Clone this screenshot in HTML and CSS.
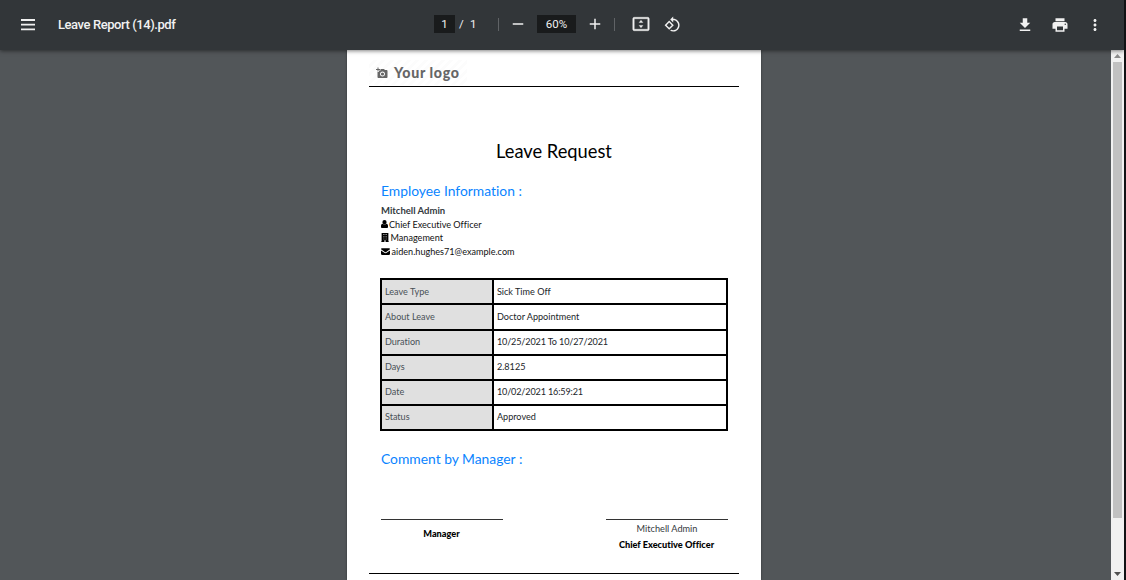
FILE: index.html
```html
<!DOCTYPE html>
<html lang="en">
<head>
<meta charset="utf-8">
<title>Leave Report (14).pdf</title>
<link rel="stylesheet" href="styles.css">
</head>
<body>
<div class="viewer">
  <header class="toolbar">
    <div class="start">
      <svg class="menu" viewBox="0 0 14 12"><path d="M0 1h14M0 5.7h14M0 10.4h14"/></svg>
      <span class="filename">Leave Report (14).pdf</span>
    </div>
    <div class="center">
      <span class="box page-no">1</span>
      <span class="slash">/</span>
      <span class="total">1</span>
      <i class="divider first"></i>
      <svg class="icon minus" viewBox="0 0 24 24"><path d="M19 13H5v-2h14v2z"/></svg>
      <span class="box zoom">60%</span>
      <svg class="icon plus" viewBox="0 0 24 24"><path d="M19 13h-6v6h-2v-6H5v-2h6V5h2v6h6v2z"/></svg>
      <i class="divider second"></i>
      <svg class="icon fit" viewBox="0 0 24 24"><path d="M21 3H3c-1.1 0-2 .9-2 2v14c0 1.1.9 2 2 2h18c1.1 0 2-.9 2-2V5c0-1.1-.9-2-2-2zm0 16H3V5h18v14zM12 7l-2.500 3h5zM9.500 14l2.500 3 2.500-3z"/></svg>
      <svg class="icon rotate" viewBox="0 0 24 24"><path d="M7.34 6.41.86 12.9l6.49 6.48 6.49-6.48-6.5-6.49zM3.69 12.9l3.66-3.66L11 12.9l-3.66 3.66-3.65-3.66zM19.36 6.64C17.61 4.88 15.3 4 13 4V.76L8.76 5 13 9.24V6c1.79 0 3.58.68 4.95 2.05 2.73 2.73 2.73 7.17 0 9.9C16.58 19.32 14.79 20 13 20c-.97 0-1.94-.21-2.84-.61l-1.49 1.49C10.02 21.62 11.51 22 13 22c2.3 0 4.61-.88 6.36-2.64 3.52-3.51 3.52-9.21 0-12.72z"/></svg>
    </div>
    <div class="end">
      <svg class="icon" viewBox="0 0 24 24"><path d="M19 9h-4V3H9v6H5l7 7 7-7zM5 18v2h14v-2H5z"/></svg>
      <svg class="icon" viewBox="0 0 24 24"><path d="M19 8H5c-1.66 0-3 1.34-3 3v6h4v4h12v-4h4v-6c0-1.66-1.34-3-3-3zm-3 11H8v-5h8v5zm3-7c-.55 0-1-.45-1-1s.45-1 1-1 1 .45 1 1-.45 1-1 1zm-1-9H6v4h12V3z"/></svg>
      <svg class="icon" viewBox="0 0 24 24"><path d="M12 8c1.1 0 2-.9 2-2s-.9-2-2-2-2 .9-2 2 .9 2 2 2zm0 2c-1.1 0-2 .9-2 2s.9 2 2 2 2-.9 2-2-.9-2-2-2zm0 6c-1.1 0-2 .9-2 2s.9 2 2 2 2-.9 2-2-.9-2-2-2z"/></svg>
    </div>
  </header>
  <main class="stage">
    <article class="paper">
      <div class="letterhead">
        <div class="logo">
          <svg viewBox="0 0 24 24"><path fill-rule="evenodd" d="M3 4V1h2v3h3v2H5v3H3V6H0V4h3zm3 6V7h3V4h7l1.830 2H21c1.100 0 2 .9 2 2v12c0 1.100-.9 2-2 2H5c-1.100 0-2-.9-2-2V10h3zm7 9c2.760 0 5-2.240 5-5s-2.240-5-5-5-5 2.240-5 5 2.240 5 5 5zm-3.200-5a3.200 3.200 0 1 0 6.400 0 3.200 3.200 0 1 0-6.400 0z"/></svg>
          <span>Your logo</span>
        </div>
      </div>
      <div class="body">
        <h1>Leave Request</h1>
        <h2>Employee Information :</h2>
        <ul class="person">
          <li class="name">Mitchell Admin</li>
          <li class="job"><svg viewBox="0 0 14 16"><path d="M7 8.500a4.200 4.200 0 1 0 0-8.500 4.200 4.200 0 0 0 0 8.500zM3 7.500c2 2 6 2 8 0 2 .5 3 2.500 3 4.500v2c0 1-.7 2-2 2H2c-1.300 0-2-1-2-2v-2c0-2 1-4 3-4.500z"/></svg><span>Chief Executive Officer</span></li>
          <li class="dept"><svg viewBox="0 0 14 16"><path fill-rule="evenodd" d="M1 0h12v15h1v1H8v-3H6v3H0v-1h1zM4 2v1.500h2V2zm4 0v1.500h2V2zM4 6v1.500h2V6zm4 0v1.500h2V6zM4 10v1h2v-1zm4 0v1h2v-1z"/></svg><span>Management</span></li>
          <li class="mail"><svg viewBox="0 0 16 12"><path d="M0 1.500C0 .6.7 0 1.500 0h13c.8 0 1.500.6 1.500 1.500v.7L9.200 7c-.8.5-1.600.5-2.400 0L0 2.200zM0 4l6 4.300c1.300.9 2.700.9 4 0L16 4v6.500c0 .8-.7 1.500-1.500 1.500h-13C.7 12 0 11.300 0 10.500z"/></svg><span>aiden.hughes71@example.com</span></li>
        </ul>
        <table class="details">
          <tr><th>Leave Type</th><td>Sick Time Off</td></tr>
          <tr><th>About Leave</th><td>Doctor Appointment</td></tr>
          <tr><th>Duration</th><td class="digits">10/25/2021 To 10/27/2021</td></tr>
          <tr><th>Days</th><td>2.8125</td></tr>
          <tr><th>Date</th><td class="digits">10/02/2021 16:59:21</td></tr>
          <tr><th>Status</th><td>Approved</td></tr>
        </table>
        <h2 class="comment">Comment by Manager :</h2>
        <div class="signatures">
          <div class="sign"><b>Manager</b></div>
          <div class="sign"><span>Mitchell Admin</span><b>Chief Executive Officer</b></div>
        </div>
      </div>
      <div class="footer-rule"></div>
    </article>
    <div class="scrollbar">
      <svg viewBox="0 0 7 4"><path fill="#8b8b8b" d="M3.500 0 7 4H0z"/></svg>
      <div class="thumb"></div>
      <svg viewBox="0 0 7 4"><path fill="#505050" d="M0 0h7L3.500 4z"/></svg>
    </div>
  </main>
</div>
</body>
</html>
```
FILE: styles.css
```css
* { box-sizing: border-box; }
body { margin: 0; background: #111214; font-family: Lato, sans-serif; font-variant-ligatures: none; }
svg { display: block; flex: none; }
.viewer { width: 1124px; height: 580px; display: flex; flex-direction: column; overflow: hidden; background: #525659; }

.toolbar { flex: none; height: 50px; display: grid; grid-template-columns: 434px 1fr auto; align-items: center; padding-bottom: 2px; background: #323639; box-shadow: 0 1px 4px rgba(0,0,0,.5); position: relative; z-index: 1; color: #f1f1f1; font-family: Roboto, sans-serif; }
.start { display: flex; align-items: center; padding: 1px 0 0 21px; gap: 23px; }
.menu { width: 14px; height: 12px; stroke: #f1f1f1; stroke-width: 1.8; }
.filename { font-size: 13px; font-weight: 500; line-height: 18px; letter-spacing: -.43px; white-space: nowrap; }
.center { display: flex; align-items: center; font-size: 11.500px; line-height: 18px; }
.box { background: #191b1c; height: 18px; text-align: center; }
.page-no { width: 21px; }
.slash { margin-left: 4px; width: 8px; }
.total { margin-left: 3px; width: 7px; }
.divider { width: 1px; height: 13px; background: #606366; }
.first { margin-left: 21px; }
.second { margin-left: 10px; }
.icon { width: 18px; height: 18px; fill: #f1f1f1; }
.minus { margin-left: 10px; }
.zoom { width: 39px; margin-left: 10px; }
.plus { margin-left: 10px; }
.fit { margin-left: 17px; stroke: #f1f1f1; stroke-width: .5; }
.rotate { margin-left: 14px; width: 17px; height: 17px; }
.end { display: flex; gap: 17px; padding: 1px 20.500px 0 0; }

.stage { flex: 1; min-height: 0; display: grid; grid-template-columns: 347px 414px 1fr 13px; }
.paper { grid-column: 2; height: 530px; background: #fff; padding: 0 22px; color: #212529; box-shadow: 0 0 2px #303335; overflow: hidden; }
.letterhead { height: 37px; padding-top: 10px; border-bottom: 1px solid #000; }
.logo { width: 98px; height: 25px; display: flex; align-items: center; gap: 6px; padding-left: 7px; color: #666; font: 900 14.200px/25px Lato, sans-serif; letter-spacing: .65px; background: repeating-linear-gradient(135deg, #fff 0 3px, #fcfcfc 3px 6px); white-space: nowrap; }
.logo svg { width: 12px; height: 12px; fill: #666; }
.body { height: 486px; padding: 52px 11px 0 12px; }
h1, h2 { margin: 0; font-weight: 400; }
h1 { margin-left: -1px; text-align: center; font-size: 18.300px; line-height: 24px; color: #000; }
h2 { margin-top: 18px; font-size: 13.850px; line-height: 20px; color: #0a84ff; white-space: nowrap; }
.person { list-style: none; margin: 3px 0 0; padding: 0; font-size: 9.100px; line-height: 13.600px; color: #111; }
.person li { display: flex; align-items: center; height: 13.600px; white-space: nowrap; }
.person .name { font-size: 9.500px; font-weight: 700; color: #343a40; }
.person svg { fill: #000; }
.job svg { width: 7px; height: 8px; margin-right: 1px; }
.dept svg { width: 8px; height: 9px; margin-right: 1.500px; }
.mail svg { width: 9px; height: 7px; margin-right: 1.500px; }
.details { width: 348px; margin: 20px 0 0 -.6px; border-collapse: collapse; table-layout: fixed; font-size: 9.100px; line-height: 12px; }
.details tr { height: 25.100px; }
.details th, .details td { padding: 0 2px .5px 2.500px; border: 2px solid #000; text-align: left; font-weight: 400; white-space: nowrap; }
.details th { width: 112px; background: #e0e0e0; color: #495057; }
.details .digits { letter-spacing: -.15px; }
.comment { margin-top: 18px; }
.signatures { display: flex; justify-content: space-between; margin-top: 50px; }
.sign { width: 122px; border-top: 1px solid #333; text-align: center; font-size: 9.200px; line-height: 16px; padding-top: 6px; color: #000; }
.sign b { display: block; margin-left: -1px; font-weight: 900; }
.sign span { display: block; margin-top: -5px; color: #343a40; }
.footer-rule { height: 1px; background: #000; }

.scrollbar { grid-column: 4; display: flex; flex-direction: column; align-items: center; padding: 4px 0 4px; background: #f1f1f1; }
.scrollbar svg { width: 7px; height: 4px; }
.thumb { width: 9px; height: 456px; margin: 4px 0 auto; background: #c1c1c1; }
```
